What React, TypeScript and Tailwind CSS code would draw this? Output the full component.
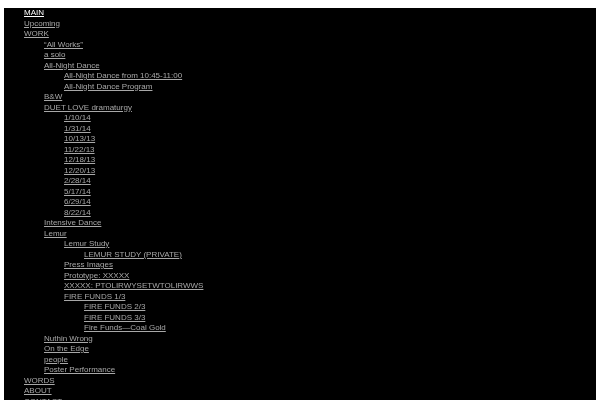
type Item = { label: string; level: number; active?: boolean };

const items: Item[] = [
   { label: "MAIN", level: 0, active: true },
   { label: "Upcoming", level: 0 },
   { label: "WORK", level: 0 },
   { label: "\u201CAll Works\u201D", level: 1 },
   { label: "a solo", level: 1 },
   { label: "All-Night Dance", level: 1 },
   { label: "All-Night Dance from 10:45-11:00", level: 2 },
   { label: "All-Night Dance Program", level: 2 },
   { label: "B&W", level: 1 },
   { label: "DUET LOVE dramaturgy", level: 1 },
   { label: "1/10/14", level: 2 },
   { label: "1/31/14", level: 2 },
   { label: "10/13/13", level: 2 },
   { label: "11/22/13", level: 2 },
   { label: "12/18/13", level: 2 },
   { label: "12/20/13", level: 2 },
   { label: "2/28/14", level: 2 },
   { label: "5/17/14", level: 2 },
   { label: "6/29/14", level: 2 },
   { label: "8/22/14", level: 2 },
   { label: "Intensive Dance", level: 1 },
   { label: "Lemur", level: 1 },
   { label: "Lemur Study", level: 2 },
   { label: "LEMUR STUDY (PRIVATE)", level: 3 },
   { label: "Press Images", level: 2 },
   { label: "Prototype: XXXXX", level: 2 },
   { label: "XXXXX: PTOLIRWYSETWTOLIRWWS", level: 2 },
   { label: "FIRE FUNDS 1/3", level: 2 },
   { label: "FIRE FUNDS 2/3", level: 3 },
   { label: "FIRE FUNDS 3/3", level: 3 },
   { label: "Fire Funds\u2014Coal Gold", level: 3 },
   { label: "Nuthin Wrong", level: 1 },
   { label: "On the Edge", level: 1 },
   { label: "people", level: 1 },
   { label: "Poster Performance", level: 1 },
   { label: "WORDS", level: 0 },
   { label: "ABOUT", level: 0 },
   { label: "CONTACT", level: 0 },
];

const indent = ["pl-[20px]", "pl-[40px]", "pl-[60px]", "pl-[80px]"];

export default function App() {
   return (
      <div className="h-[400px] bg-white pt-2 pl-1 overflow-hidden">
         <nav className="w-[592px] bg-black">
            <ul className="will-change-transform font-['Liberation_Sans',Arial,sans-serif] text-[8px] leading-[10.5px]">
               {items.map((item, i) => (
                  <li
                     key={i}
                     className={item.active
                        ? `${indent[item.level]} text-white underline`
                        : `${indent[item.level]} text-[#a8a8a8] underline`}>
                     {item.label}
                  </li>
               ))}
            </ul>
         </nav>
      </div>
   );
}
